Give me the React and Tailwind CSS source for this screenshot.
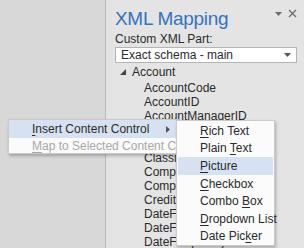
import React from "react";

const U = ({ children }) => <span className="underline underline-offset-[2px] decoration-[1px]">{children}</span>;

const treeChildren = [
  "AccountCode",
  "AccountID",
  "AccountManagerID",
  "AccountName",
  "AccountNumber",
  "ClassificationID",
  "CompanyCode",
  "CompanyName",
  "CreditLimit",
  "DateFreezeStart",
  "DateFreezeEnd",
  "DateFrequency",
];

const subItems = [
  [<><U>R</U>ich Text</>, false],
  [<>Plain <U>T</U>ext</>, false],
  [<><U>P</U>icture</>, true],
  [<><U>C</U>heckbox</>, false],
  [<>Combo <U>B</U>ox</>, false],
  [<><U>D</U>ropdown List</>, false],
  [<>Date Pic<U>k</U>er</>, false],
];

export default function App() {
  return (
    <div
      className="relative w-[304px] h-[248px] overflow-hidden flex text-[#2a2a2a] text-[12px]"
      style={{ fontFamily: '"Liberation Sans", Arial, sans-serif' }}
    >
      <div className="w-[106px] h-full bg-[#d8d8d8] border-r border-[#b9b9b9]" />
      <div className="flex-1 h-full bg-[#e4e4e4] pl-[9px] pr-[7px] flex flex-col">
        <div className="flex items-start justify-between h-[32px] shrink-0 pt-[8px]">
          <div className="text-[19px] font-light text-[#3573bd] leading-[22px] tracking-[-0.3px]">XML Mapping</div>
          <div className="flex items-center gap-[6px] pt-[1px] text-[#6a6a6a]">
            <svg width="7" height="4" viewBox="0 0 7 4"><path d="M0 0h7L3.5 4z" fill="#6a6a6a" /></svg>
            <svg width="9" height="9" viewBox="0 0 9 9"><path d="M1 1l7 7M8 1l-7 7" stroke="#6a6a6a" strokeWidth="1.3" /></svg>
          </div>
        </div>
        <div className="leading-[14px] h-[15px] shrink-0">Custom XML Part:</div>
        <div className="h-[16px] shrink-0 bg-white border border-[#b4b4b4] flex items-center justify-between pl-[5px] pr-[5px]">
          <span className="leading-[14px]">Exact schema - main</span>
          <svg width="7" height="4" viewBox="0 0 7 4"><path d="M0 0h7L3.5 4z" fill="#555" /></svg>
        </div>
        <div className="pt-[2px] flex flex-col">
          <div className="flex items-center h-[14px] pl-[5px]">
            <svg width="6" height="6" viewBox="0 0 6 6" className="mr-[6px]"><path d="M6 0v6H0z" fill="#444" /></svg>
            <span>Account</span>
          </div>
          <div className="pl-[29px] flex flex-col pt-[2px]">
            {treeChildren.map((t) => (
              <div key={t} className="h-[14px] leading-[14px] whitespace-nowrap">{t}</div>
            ))}
          </div>
        </div>
      </div>

      <div className="absolute left-[8px] top-[119px] w-[171px] h-[35px] bg-[#fbfbfb] border border-[#cacaca] shadow-[1px_2px_3px_rgba(0,0,0,0.25)] flex flex-col">
        <div className="h-[18px] bg-[#d6e2f2] flex items-center pl-[23px] pr-[8px] justify-between">
          <span><U>I</U>nsert Content Control</span>
          <svg width="4" height="7" viewBox="0 0 4 7"><path d="M0 0l4 3.5L0 7z" fill="#555" /></svg>
        </div>
        <div className="h-[16px] flex items-center pl-[23px] text-[#a8a8a8] whitespace-nowrap">
          <span><U>M</U>ap to Selected Content Control</span>
        </div>
      </div>

      <div className="absolute left-[176px] top-[120px] w-[99px] h-[126px] bg-[#fbfbfb] border border-[#cacaca] shadow-[1px_2px_3px_rgba(0,0,0,0.25)] flex flex-col p-[1px]">
        {subItems.map(([label, hl], i) => (
          <div
            key={i}
            className={`h-[17.6px] flex items-center pl-[22px] whitespace-nowrap ${hl ? "bg-[#d6e2f2]" : ""}`}
          >
            <span>{label}</span>
          </div>
        ))}
      </div>
    </div>
  );
}
